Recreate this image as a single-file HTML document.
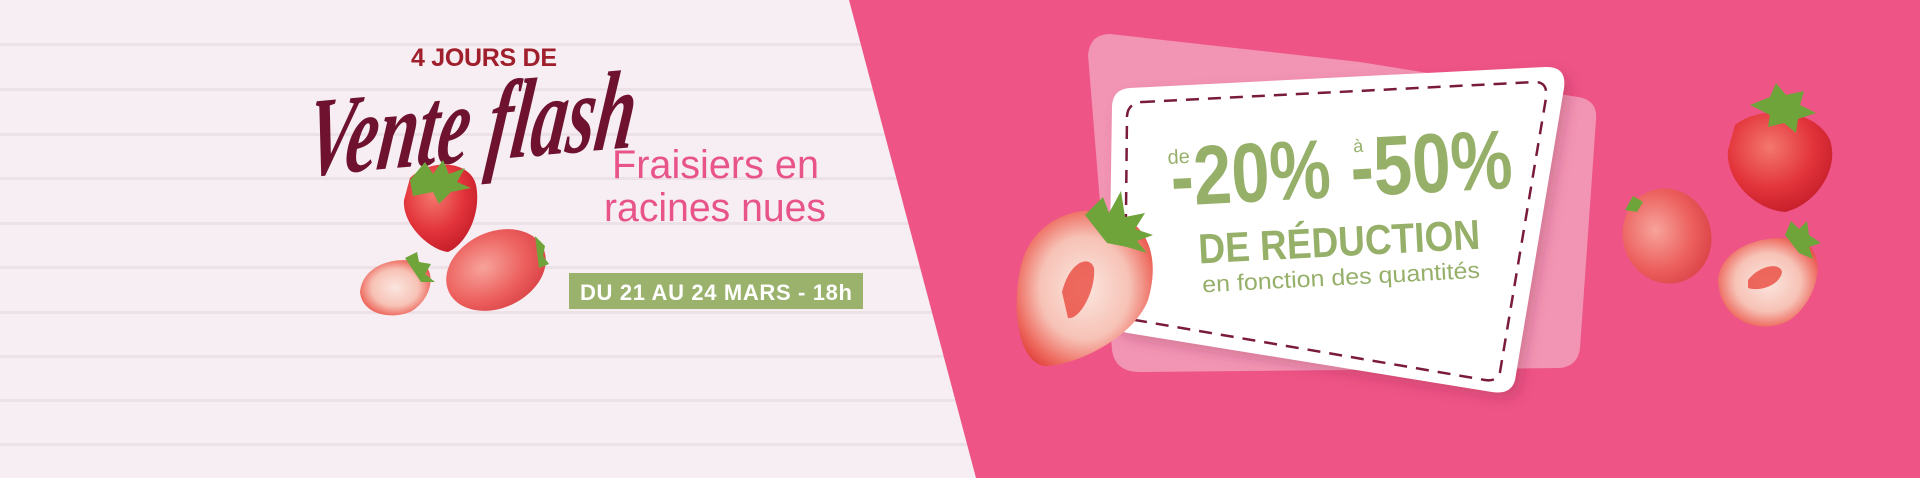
<!DOCTYPE html>
<html><head><meta charset="utf-8"><style>
html,body{margin:0;padding:0;width:1920px;height:478px;overflow:hidden;background:#f6eef2}
svg{display:block}
</style></head><body>
<svg width="1920" height="478" viewBox="0 0 1920 478" xmlns="http://www.w3.org/2000/svg">
<defs>
<radialGradient id="rs" cx="40%" cy="35%" r="70%"><stop offset="0" stop-color="#f4776e"/><stop offset="0.6" stop-color="#e2333a"/><stop offset="1" stop-color="#c31d2a"/></radialGradient>
<radialGradient id="rp" cx="40%" cy="40%" r="70%"><stop offset="0" stop-color="#f7a39b"/><stop offset="0.6" stop-color="#ec5f5d"/><stop offset="1" stop-color="#d83f45"/></radialGradient>
<radialGradient id="rh" cx="50%" cy="50%" r="60%"><stop offset="0" stop-color="#fbe6df"/><stop offset="0.55" stop-color="#f7c2b6"/><stop offset="0.85" stop-color="#ee6b60"/><stop offset="1" stop-color="#e3443f"/></radialGradient>
<filter id="sh" x="-10%" y="-10%" width="130%" height="130%"><feDropShadow dx="6" dy="6" stdDeviation="6" flood-color="#7a1a3c" flood-opacity="0.25"/></filter>
</defs>
<g fill="#ece1e7">
<rect x="0" y="43" width="1000" height="3"/><rect x="0" y="88" width="1000" height="3"/><rect x="0" y="133" width="1000" height="3"/><rect x="0" y="177" width="1000" height="3"/><rect x="0" y="222" width="1000" height="3"/><rect x="0" y="266" width="1000" height="3"/><rect x="0" y="311" width="1000" height="3"/><rect x="0" y="355" width="1000" height="3"/><rect x="0" y="399" width="1000" height="3"/><rect x="0" y="443" width="1000" height="3"/>
</g>
<polygon points="849,0 1920,0 1920,478 976,478" fill="#ee5486"/>
<text x="411" y="66" font-family="Liberation Sans, sans-serif" font-weight="bold" font-size="25" fill="#a01f2c" textLength="146">4 JOURS DE</text>
<g transform="translate(303,176) rotate(-5) skewX(-12)">
<text x="0" y="0" font-family="Liberation Serif, serif" font-style="italic" font-weight="bold" font-size="112" fill="#6e1230" textLength="330" lengthAdjust="spacingAndGlyphs">Vente flash</text>
</g>
<text x="612" y="178" font-family="Liberation Sans, sans-serif" font-size="40" fill="#e8548a" textLength="207" lengthAdjust="spacingAndGlyphs">Fraisiers en</text>
<text x="604" y="221" font-family="Liberation Sans, sans-serif" font-size="40" fill="#e8548a" textLength="222" lengthAdjust="spacingAndGlyphs">racines nues</text>
<rect x="569" y="273" width="294" height="36" fill="#9ab26b"/>
<text x="580" y="300" font-family="Liberation Sans, sans-serif" font-weight="bold" font-size="22" fill="#fff" textLength="272">DU 21 AU 24 MARS - 18h</text>
<g>
<path d="M410,178 C430,158 470,160 476,185 C482,215 465,245 448,252 C430,250 402,225 404,200 Z" fill="url(#rs)"/>
<path d="M410,180 l15,-18 l8,12 l10,-14 l6,14 l16,-6 l-8,14 l14,6 l-20,4 l-12,12 l-6,-12 l-20,4 z" fill="#6ea43a"/>
<ellipse cx="496" cy="270" rx="52" ry="38" transform="rotate(-25 496 270)" fill="url(#rp)"/>
<path d="M535,236 l10,10 l-2,10 l6,8 l-10,4 z" fill="#6ea43a"/>
<path d="M360,292 C362,268 390,255 420,262 C438,270 432,300 410,312 C390,320 362,314 360,292 Z" fill="url(#rh)"/>
<path d="M405,258 l12,-6 l2,10 l12,2 l-6,10 l10,8 l-14,0 z" fill="#6ea43a"/>
</g>
<path d="M1110,34 Q1090,34 1088,55 L1112,350 Q1115,372 1140,372 L1560,368 Q1578,366 1580,348 L1596,120 Q1598,100 1578,97 L1360,62 Z" fill="#f294b4"/>
<path d="M1130,88 L1545,67 Q1567,66 1564,88 L1515,380 Q1511,395 1492,392 L1128,333 Q1108,329 1109,308 L1112,106 Q1113,89 1130,88 Z" fill="#fff" filter="url(#sh)"/>
<path d="M1142,102 L1535,82 Q1548,82 1546,98 L1500,372 Q1497,382 1485,380 L1135,320 Q1125,318 1125,307 L1127,116 Q1128,103 1142,102 Z" fill="none" stroke="#7a1a3c" stroke-width="2.5" stroke-dasharray="13,9"/>
<g transform="rotate(-3 1340 200)" font-family="Liberation Sans, sans-serif" fill="#96b06a">
<text x="1170" y="155" font-size="20">de</text>
<text x="1172" y="197" font-size="84" font-weight="bold" textLength="160" lengthAdjust="spacingAndGlyphs">-20%</text>
<text x="1356" y="153" font-size="18">à</text>
<text x="1352" y="197" font-size="84" font-weight="bold" textLength="162" lengthAdjust="spacingAndGlyphs">-50%</text>
<text x="1196" y="256" font-size="42" font-weight="bold" textLength="282" lengthAdjust="spacingAndGlyphs">DE RÉDUCTION</text>
<text x="1198" y="285" font-size="23" textLength="278" lengthAdjust="spacingAndGlyphs">en fonction des quantités</text>
</g>
<path d="M1020,270 C1030,220 1075,205 1110,212 C1150,222 1160,260 1148,300 C1135,335 1080,365 1045,366 C1018,362 1012,310 1020,270 Z" fill="url(#rh)"/>
<path d="M1062,292 C1070,260 1090,255 1094,268 C1096,290 1080,320 1068,318 Z" fill="#ea4a3e" opacity="0.8"/>
<path d="M1085,215 l18,-18 l6,16 l12,-22 l4,26 l20,-4 l-10,16 l18,6 l-16,6 l10,12 l-20,-6 l-20,-4 z" fill="#6ea43a"/>
<path d="M1735,125 C1760,105 1815,108 1830,140 C1840,170 1815,205 1785,212 C1755,210 1725,180 1728,150 Z" fill="url(#rs)"/>
<path d="M1750,105 l20,-8 l6,-14 l10,12 l18,-4 l-4,14 l16,8 l-18,6 l-2,14 l-12,-10 l-16,4 l2,-12 z" fill="#6ea43a"/>
<ellipse cx="1667" cy="236" rx="44" ry="48" transform="rotate(-20 1667 236)" fill="url(#rp)"/>
<path d="M1625,210 l8,-14 l10,6 l-6,10 z" fill="#6ea43a"/>
<path d="M1718,280 C1720,250 1760,232 1800,240 C1830,252 1818,300 1790,320 C1765,335 1720,325 1718,280 Z" fill="url(#rh)"/>
<path d="M1748,280 C1760,265 1780,262 1782,272 C1780,285 1760,292 1748,288 Z" fill="#ea4a3e" opacity="0.8"/>
<path d="M1785,235 l6,-14 l8,8 l8,-8 l2,14 l12,8 l-12,4 l4,12 l-14,-6 z" fill="#6ea43a"/>
</svg>
</body></html>
